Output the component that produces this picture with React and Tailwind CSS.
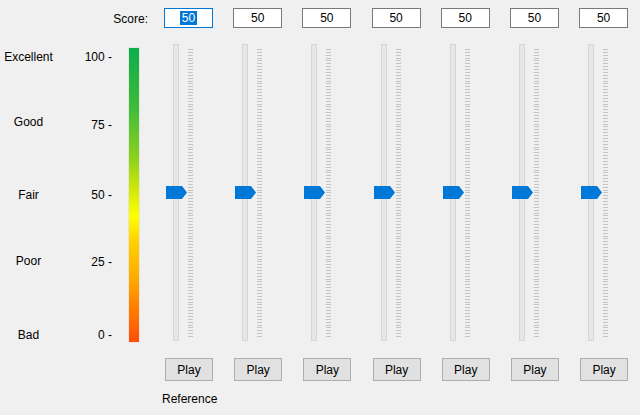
import React from "react";

const labels = [
  { text: "Excellent", mt: "mt-[6px]" },
  { text: "Good", mt: "mt-[51px]" },
  { text: "Fair", mt: "mt-[59px]" },
  { text: "Poor", mt: "mt-[52px]" },
  { text: "Bad", mt: "mt-[60px]" },
];

const numbers = [
  { text: "100 -", mt: "mt-[6px]" },
  { text: "75 -", mt: "mt-[54px]" },
  { text: "50 -", mt: "mt-[56px]" },
  { text: "25 -", mt: "mt-[53px]" },
  { text: "0 -", mt: "mt-[59px]" },
];

const sliders = [50, 50, 50, 50, 50, 50, 50];

function Thumb() {
  return (
    <svg width="21" height="13" viewBox="0 0 21 13" className="block">
      <polygon points="0,0 16,0 21,6.5 16,13 0,13" fill="#0078d7" />
    </svg>
  );
}

function Slider() {
  return (
    <div className="relative h-[299px] w-[69.2px] shrink-0">
      <div className="ml-[9px] h-[297px] w-[6px] border border-[#d6d6d6] bg-[#e7e7e7]" />
      <div className="absolute left-[24px] top-[5px] h-[288px] w-[5px] bg-[repeating-linear-gradient(to_bottom,#c4c4c4_0px,#c4c4c4_1px,transparent_1px,transparent_2.87px)]" />
      <div className="absolute left-[2px] top-[142px]">
        <Thumb />
      </div>
    </div>
  );
}

export default function App() {
  return (
    <div className="w-[640px] h-[415px] bg-[#f0f0f0] text-[12px] leading-[14px] text-black font-['Liberation_Sans',Arial,sans-serif] overflow-hidden">
      {/* header row */}
      <div className="flex pt-[8px]">
        <div className="w-[164px] shrink-0 flex items-center justify-end pr-[16px] pt-[1px]">Score:</div>
        {sliders.map((v, i) => (
          <div key={i} className="w-[69.2px] shrink-0">
            {i === 0 ? (
              <div className="w-[49px] h-[20px] border border-[#0078d7] bg-white flex items-center justify-center">
                <span className="bg-[#0078d7] text-white px-[2px] leading-[14px]">{v}</span>
              </div>
            ) : (
              <div className="w-[49px] h-[20px] border border-[#7a7a7a] bg-white flex items-center justify-center">
                {v}
              </div>
            )}
          </div>
        ))}
      </div>

      {/* body */}
      <div className="flex mt-[16px]">
        <div className="w-[57px] shrink-0 flex flex-col items-center">
          {labels.map(l => (
            <div key={l.text} className={l.mt}>{l.text}</div>
          ))}
        </div>
        <div className="w-[55px] shrink-0 flex flex-col items-end">
          {numbers.map(n => (
            <div key={n.text} className={n.mt}>{n.text}</div>
          ))}
        </div>
        <div className="ml-[16px] mt-[3px] shrink-0 w-[12px] h-[296px] border border-[#e4e4e4] bg-[linear-gradient(to_bottom,#0cae4a_0%,#3dbb3a_20%,#8ed21c_38%,#cfe90a_48%,#ffff00_57%,#ffd000_66%,#ffac00_78%,#ff8000_88%,#ff4e0a_100%)]" />
        <div className="ml-[24px] flex shrink-0">
          {sliders.map((v, i) => (
            <Slider key={i} />
          ))}
        </div>
      </div>

      {/* play buttons */}
      <div className="flex mt-[15px] pl-[164px]">
        {sliders.map((v, i) => (
          <div key={i} className="w-[69.2px] shrink-0">
            <button className="ml-[1px] w-[48px] h-[23px] border border-[#adadad] bg-[#e1e1e1] flex items-center justify-center">
              Play
            </button>
          </div>
        ))}
      </div>

      <div className="pl-[162px] mt-[11px]">Reference</div>
    </div>
  );
}
